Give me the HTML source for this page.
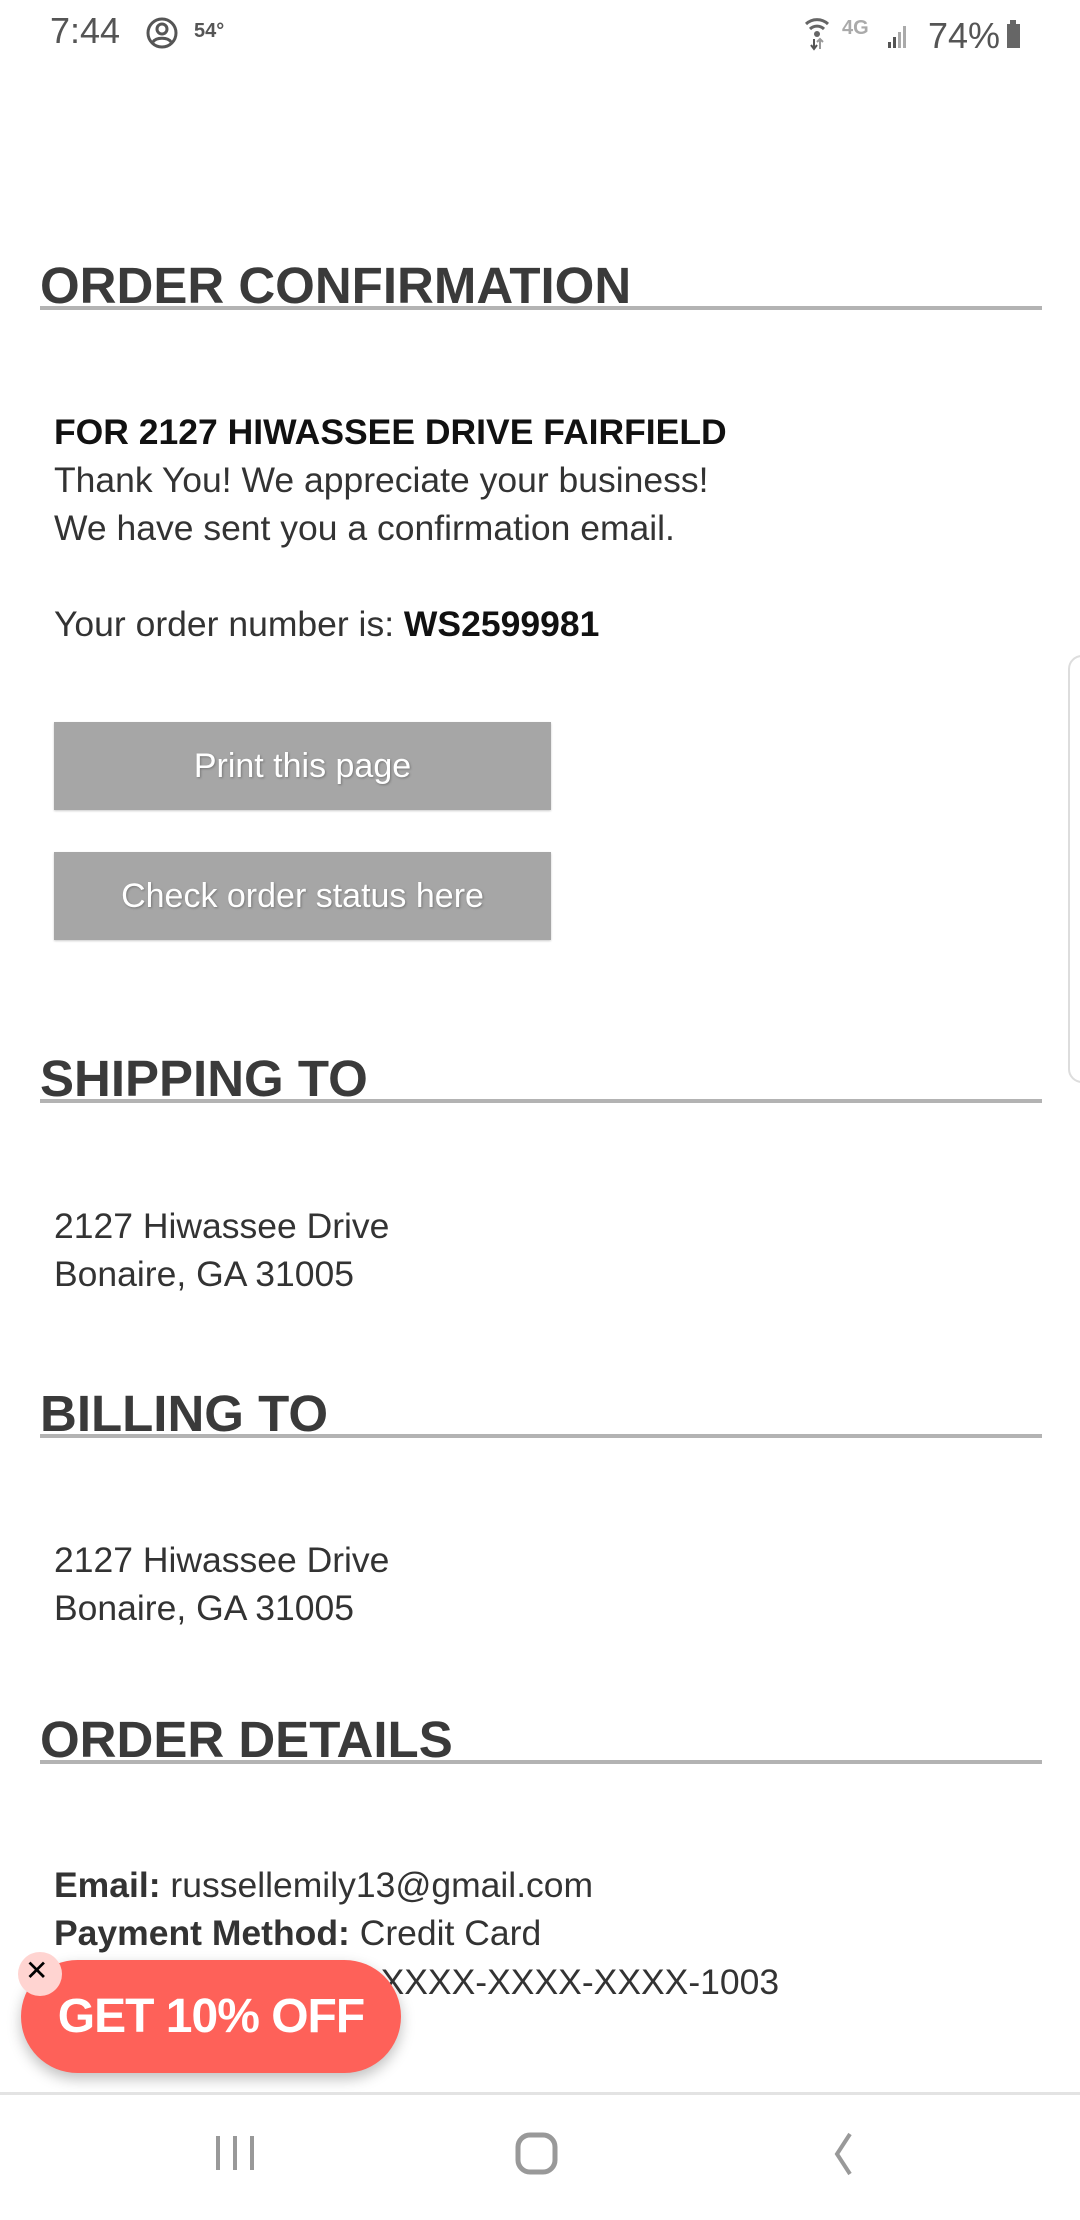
<!DOCTYPE html>
<html><head><meta charset="utf-8"><style>
*{margin:0;padding:0;box-sizing:border-box}
body{width:1080px;height:2220px;background:#fff;position:relative;overflow:hidden;font-family:"Liberation Sans",sans-serif;color:#333}
.a{position:absolute;white-space:nowrap}
.h{font-weight:bold;font-size:51px;color:#3a3a3a;letter-spacing:0;left:40px}
.ul{position:absolute;left:40px;width:1002px;height:4px;background:#b3b3b3}
.t{font-size:35.5px;left:54px;color:#333}
.btn{position:absolute;left:54px;width:497px;height:88px;background:#a6a6a6;color:#fff;font-size:34px;text-align:center;line-height:88px;text-shadow:1px 1px 2px #777;box-shadow:0 1px 2px #ccc}
</style></head><body>
<div class="a" style="left:50px;top:10px;font-size:36px;color:#555">7:44</div>
<svg class="a" style="left:145px;top:16px" width="34" height="34" viewBox="0 0 34 34"><circle cx="17" cy="17" r="14" fill="none" stroke="#555" stroke-width="3"/><circle cx="17" cy="13" r="5" fill="none" stroke="#555" stroke-width="3"/><path d="M8 26c3-5 15-5 18 0" fill="none" stroke="#555" stroke-width="3"/></svg>
<div class="a" style="left:194px;top:20px;font-size:20px;color:#555;font-weight:bold">54°</div>
<svg class="a" style="left:802px;top:12px" width="230" height="40" viewBox="0 0 230 40"><path d="M4 12a16 16 0 0 1 22 0M8 17a10 10 0 0 1 14 0" stroke="#666" stroke-width="3" fill="none"/><circle cx="15" cy="22" r="3" fill="#666"/><path d="M12 27v10M9 33l3 4 3-4" stroke="#555" stroke-width="2" fill="none"/><path d="M18 37V27M15 30l3-3 3 3" stroke="#999" stroke-width="2" fill="none"/><text x="40" y="22" font-size="20" fill="#aaa" font-family="Liberation Sans" font-weight="bold">4G</text><rect x="86" y="30" width="3" height="6" fill="#555"/><rect x="91" y="25" width="3" height="11" fill="#555"/><rect x="96" y="20" width="3" height="16" fill="#aaa"/><rect x="101" y="14" width="3" height="22" fill="#aaa"/><text x="126" y="36" font-size="36" fill="#555" font-family="Liberation Sans">74%</text><rect x="208" y="8" width="6" height="4" fill="#666"/><rect x="205" y="12" width="13" height="24" fill="#666"/></svg>

<div class="a h" style="top:256px">ORDER CONFIRMATION</div>
<div class="ul" style="top:306px"></div>
<div class="a t" style="top:412px;font-weight:bold;color:#111">FOR 2127 HIWASSEE DRIVE FAIRFIELD</div>
<div class="a t" style="top:460px">Thank You! We appreciate your business!</div>
<div class="a t" style="top:508px">We have sent you a confirmation email.</div>
<div class="a t" style="top:604px">Your order number is: <b style="color:#111">WS2599981</b></div>
<div class="btn" style="top:722px">Print this page</div>
<div class="btn" style="top:852px">Check order status here</div>

<div class="a h" style="top:1049px">SHIPPING TO</div>
<div class="ul" style="top:1099px"></div>
<div class="a t" style="top:1206px">2127 Hiwassee Drive</div>
<div class="a t" style="top:1254px">Bonaire, GA 31005</div>

<div class="a h" style="top:1384px">BILLING TO</div>
<div class="ul" style="top:1434px"></div>
<div class="a t" style="top:1540px">2127 Hiwassee Drive</div>
<div class="a t" style="top:1588px">Bonaire, GA 31005</div>

<div class="a h" style="top:1710px">ORDER DETAILS</div>
<div class="ul" style="top:1760px"></div>
<div class="a t" style="top:1865px"><b>Email:</b> russellemily13@gmail.com</div>
<div class="a t" style="top:1913px"><b>Payment Method:</b> Credit Card</div>
<div class="a t" style="top:1962px"><b>Card Number:</b> <span style="padding-left:80px">XXXX-XXXX-XXXX-1003</span></div>

<div class="a" style="left:1068px;top:655px;width:30px;height:428px;border:2px solid #ddd;border-radius:14px;background:#fff"></div>

<div class="a" style="left:21px;top:1960px;width:380px;height:113px;border-radius:57px;background:#fe6159;box-shadow:0 6px 14px rgba(0,0,0,.25);color:#fff;font-weight:bold;font-size:48px;line-height:113px;text-align:center;letter-spacing:-1px">GET 10% OFF</div>
<div class="a" style="left:18px;top:1952px;width:44px;height:44px;border-radius:50%;background:#ffd4d1"></div>
<div class="a" style="left:25px;top:1954px;font-size:28px;color:#000">✕</div>

<div class="a" style="left:0;top:2092px;width:1080px;height:3px;background:#e3e3e3"></div>
<svg class="a" style="left:0;top:2120px" width="1080" height="70"><path d="M218 16v34M235 16v34M252 16v34" stroke="#999" stroke-width="4"/><rect x="518" y="15" width="37" height="37" rx="12" fill="none" stroke="#999" stroke-width="5"/><path d="M850 14l-13 20 13 20" fill="none" stroke="#999" stroke-width="4"/></svg>
</body></html>
